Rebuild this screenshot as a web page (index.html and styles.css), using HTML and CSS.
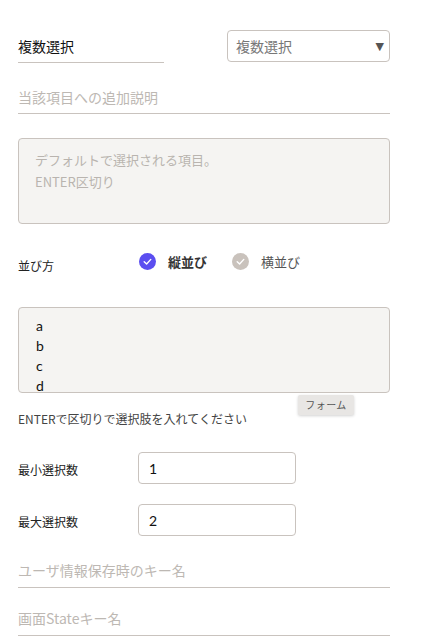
FILE: index.html
```html
<!DOCTYPE html>
<html lang="ja">
<head>
<meta charset="utf-8">
<link rel="stylesheet" href="styles.css">
</head>
<body>
<div class="form">
  <div class="row-top">
    <div class="title-field">複数選択</div>
    <div class="select">
      <span>複数選択</span>
      <span class="arrow">▼</span>
    </div>
  </div>

  <div class="line-field desc">当該項目への追加説明</div>

  <div class="area area-default">
    <div class="ph">デフォルトで選択される項目。</div>
    <div class="ph">ENTER区切り</div>
  </div>

  <div class="row-order">
    <div class="label">並び方</div>
    <div class="radio on">
      <svg class="check" width="17" height="17" viewBox="0 0 17 17"><circle cx="8.5" cy="8.5" r="8.5" fill="#5b4ef0"/><path d="M5.2 8.7 L7.6 11 L11.8 6.4" fill="none" stroke="#fff" stroke-width="1.4" stroke-linecap="round" stroke-linejoin="round"/></svg>
      <span class="rtext">縦並び</span>
    </div>
    <div class="radio off">
      <svg class="check" width="17" height="17" viewBox="0 0 17 17"><circle cx="8.5" cy="8.5" r="8.5" fill="#c9c2bc"/><path d="M5.2 8.7 L7.6 11 L11.8 6.4" fill="none" stroke="#fff" stroke-width="1.4" stroke-linecap="round" stroke-linejoin="round"/></svg>
      <span class="rtext">横並び</span>
    </div>
  </div>

  <div class="options-wrap">
    <div class="area area-options">
      <div class="opt">a</div>
      <div class="opt">b</div>
      <div class="opt">c</div>
      <div class="opt">d</div>
    </div>
    <div class="tooltip">フォーム</div>
  </div>
  <div class="hint">ENTERで区切りで選択肢を入れてください</div>

  <div class="num-row first">
    <div class="num-label">最小選択数</div>
    <div class="num-input">1</div>
  </div>
  <div class="num-row">
    <div class="num-label">最大選択数</div>
    <div class="num-input">2</div>
  </div>

  <div class="line-field key1">ユーザ情報保存時のキー名</div>
  <div class="line-field key2">画面Stateキー名</div>
</div>
</body>
</html>
```

FILE: styles.css
```css
* { box-sizing: border-box; }
html, body { margin: 0; padding: 0; background: #fff; }
body {
  font-family: "Noto Sans CJK JP", "Noto Sans", sans-serif;
  color: #222;
}
.form {
  width: 372px;
  margin-left: 18px;
  padding-top: 30px;
  display: flex;
  flex-direction: column;
}
.row-top {
  display: flex;
  justify-content: space-between;
  align-items: flex-start;
}
.title-field {
  width: 146px;
  height: 33px;
  border-bottom: 1px solid #c9c3be;
  font-size: 14px;
  line-height: 14px;
  padding-top: 9px;
  color: #111;
}
.select {
  width: 163px;
  height: 32px;
  border: 1px solid #c9c3be;
  border-radius: 4px;
  display: flex;
  align-items: center;
  justify-content: space-between;
  padding: 0 5px 0 8px;
  font-size: 14px;
  color: #777;
}
.select .arrow { font-size: 11px; color: #555; font-family: "DejaVu Sans", sans-serif; }
.line-field {
  border-bottom: 1px solid #c9c3be;
  font-size: 14px;
  color: #bdb8b3;
  height: 33px;
  line-height: 20px;
  padding-top: 6px;
}
.desc { margin-top: 18px; }
.area {
  background: #f5f4f2;
  border: 1px solid #c9c3be;
  border-radius: 4px;
  height: 86px;
  overflow: hidden;
}
.area-default {
  margin-top: 24px;
  padding: 10px 16px;
}
.area-default .ph {
  font-size: 13px;
  line-height: 22px;
  color: #b9b4af;
}
.row-order {
  display: flex;
  align-items: center;
  margin-top: 28px;
  height: 24px;
}
.label {
  width: 121px;
  font-size: 12px;
  padding-top: 3px;
  color: #222;
}
.radio {
  display: flex;
  align-items: center;
  gap: 12px;
  font-size: 13px;
  margin-right: 25px;
  margin-top: -5px;
}
.radio.on .rtext { font-weight: 700; color: #333; }
.radio.off .rtext { color: #555; }
.options-wrap { position: relative; margin-top: 31px; }
.area-options {
  padding: 8px 16px;
  height: 86px;
}
.opt {
  font-family: "Lato", "Noto Sans", sans-serif;
  font-size: 14px;
  line-height: 20px;
  color: #111;
  padding-left: 1px;
}
.tooltip {
  position: absolute;
  left: 280px;
  top: 88px;
  width: 56px;
  height: 20px;
  background: #e8e6e4;
  border-radius: 2px;
  box-shadow: 0 1px 3px rgba(0,0,0,0.18);
  font-size: 10px;
  line-height: 20px;
  text-align: center;
  color: #555;
  letter-spacing: 0.5px;
}
.hint {
  margin-top: 18px;
  font-size: 12px;
  color: #444;
  line-height: 16px;
}
.num-row {
  display: flex;
  align-items: center;
  height: 32px;
}
.num-row.first { margin-top: 25px; }
.num-row + .num-row { margin-top: 20px; }
.num-label {
  width: 120px;
  font-size: 12px;
  color: #222;
  padding-top: 3px;
}
.num-input {
  width: 158px;
  height: 32px;
  border: 1px solid #c9c3be;
  border-radius: 4px;
  padding: 0 10px;
  display: flex;
  align-items: center;
  font-family: "Lato", "Noto Sans", sans-serif;
  font-size: 14px;
  color: #111;
}
.key1 { margin-top: 18px; height: 34px; }
.key2 { margin-top: 14px; height: 34px; }
```
